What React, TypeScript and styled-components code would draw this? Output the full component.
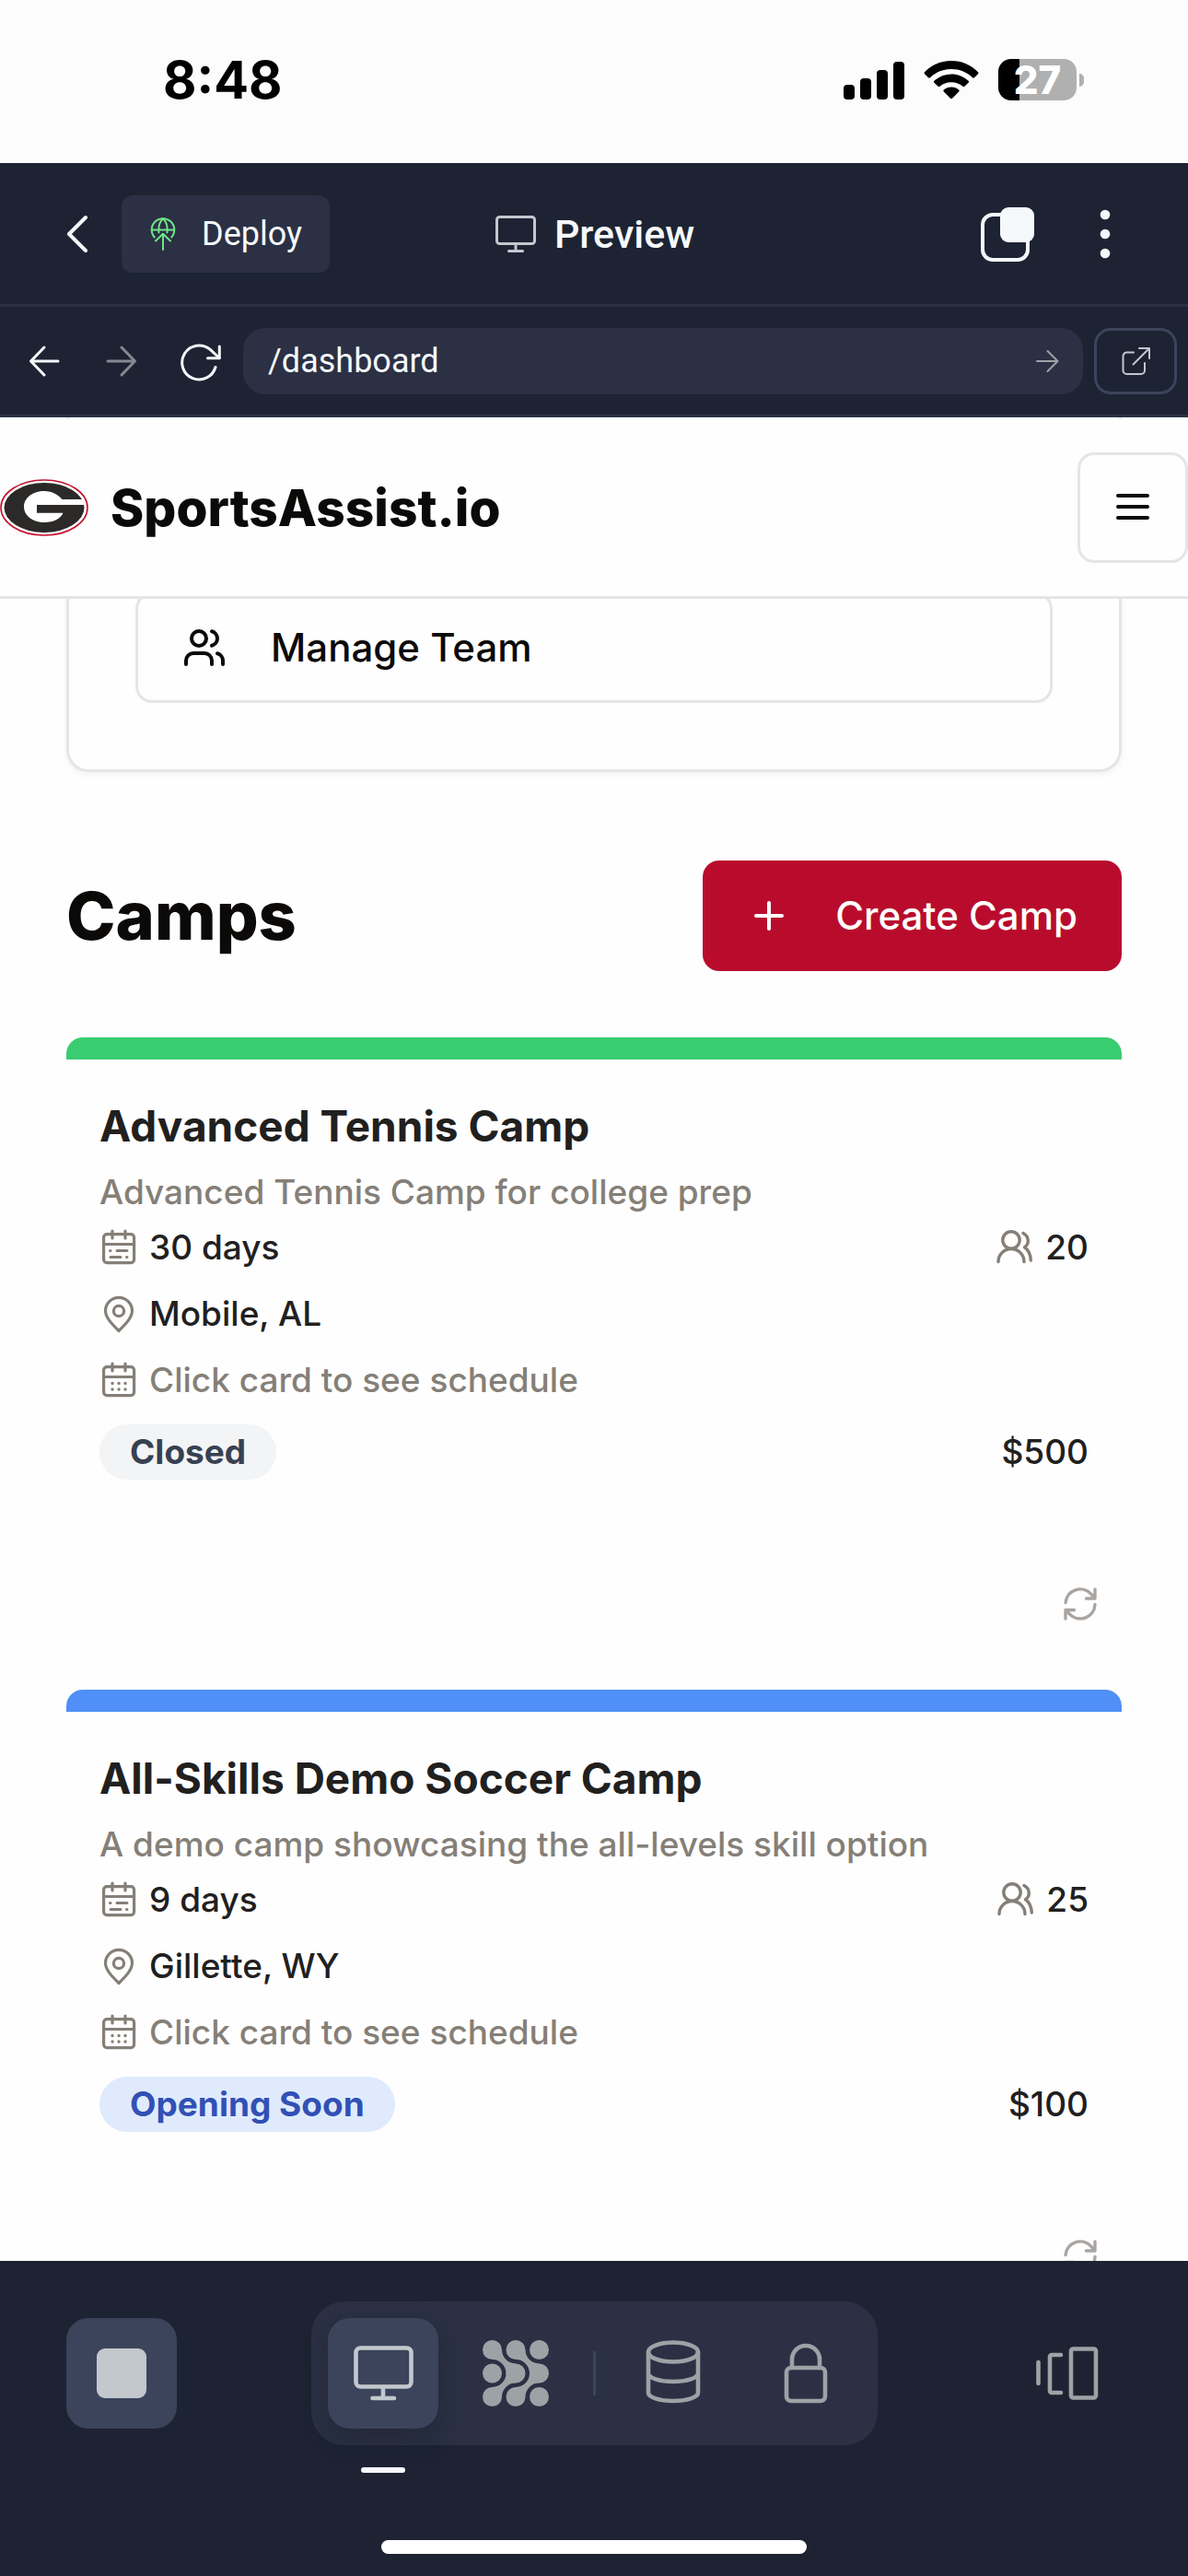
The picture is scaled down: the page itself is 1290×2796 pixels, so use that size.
import React from "react";
import styled, { createGlobalStyle } from "styled-components";
import { Plus, Users } from "lucide-react";

const GlobalStyle = createGlobalStyle`
  *, *::before, *::after { box-sizing: border-box; }
  body { margin: 0; background: #1d2333; }
  h1, h2, h3, p { margin: 0; }
  button, input { font: inherit; color: inherit; border: 0; margin: 0; padding: 0; background: none; }
  svg { display: block; flex: none; }
`;

const color = {
  navy: "#1d2333",
  slate: "#2b3044",
  steel: "#3c445c",
  snow: "#f5f9fc",
  silver: "#c2c8cc",
  muted: "#9da2a6",
  ink: "#0c0a09",
  line: "#e5e5e5",
  stone: "#857f78",
  red: "#b90c2d",
};

const Shell = styled.div`
  display: flex;
  flex-direction: column;
  height: 100vh;
  font-family: Inter, "Liberation Sans", sans-serif;
  color: ${color.ink};
`;

/* ---------- Phone status bar ---------- */

const StatusBar = styled.div`
  display: flex;
  flex: none;
  justify-content: space-between;
  align-items: center;
  height: 177px;
  padding: 0 113px 4px 177px;
  background: #fcfcfc;
  color: #000;
`;

const Clock = styled.time`
  font-size: 56px;
  line-height: 60px;
  font-weight: 700;
`;

const StatusIcons = styled.div`
  display: flex;
  align-items: center;
  gap: 21px;
`;

const BatteryWrap = styled.div`
  display: flex;
  align-items: center;
  gap: 3px;
`;

const Battery = styled.div`
  width: 85px;
  height: 45px;
  border-radius: 14px;
  background: linear-gradient(90deg, #000 27%, #b0b0b0 27%);
  color: #fff;
  font-size: 42px;
  line-height: 45px;
  font-weight: 800;
  text-align: center;
`;

const BatteryTip = styled.div`
  width: 5px;
  height: 14px;
  border-radius: 0 6px 6px 0;
  background: #b0b0b0;
`;

/* ---------- Workspace header ---------- */

const TopBar = styled.header`
  display: grid;
  flex: none;
  grid-template-columns: 1fr auto 1fr;
  align-items: center;
  height: 156px;
  padding: 0 60px;
  background: ${color.navy};
  border-bottom: 3px solid ${color.slate};
  color: ${color.snow};
  font-family: Roboto, "Liberation Sans", sans-serif;
`;

const TopBarLeft = styled.div`
  display: flex;
  align-items: center;
  gap: 24px;
`;

const TopBarRight = styled.div`
  display: flex;
  justify-content: flex-end;
  align-items: center;
  gap: 46px;
`;

const IconButton = styled.button<{ $size?: number; $tone?: string }>`
  display: grid;
  flex: none;
  place-items: center;
  width: ${(p) => p.$size ?? 60}px;
  height: ${(p) => p.$size ?? 60}px;
  color: ${(p) => p.$tone ?? color.snow};
`;

const DeployButton = styled.button`
  display: flex;
  align-items: center;
  gap: 24px;
  height: 84px;
  padding: 0 30px 0 27px;
  border-radius: 12px;
  background: ${color.slate};
  font-size: 36px;
  line-height: 48px;
`;

const ScreenTitle = styled.h1`
  display: flex;
  align-items: center;
  gap: 18px;
  font-size: 43px;
  line-height: 48px;
  font-weight: 500;
`;

/* ---------- Address bar ---------- */

const AddressBar = styled.nav`
  display: flex;
  flex: none;
  align-items: center;
  height: 120px;
  padding: 0 12px 0 6px;
  background: ${color.navy};
  border-bottom: 3px solid ${color.slate};
  font-family: Roboto, "Liberation Sans", sans-serif;
`;

const AddressField = styled.form`
  display: flex;
  flex: 1;
  align-items: center;
  min-width: 0;
  height: 72px;
  margin: 0 12px 0 6px;
  padding: 0 9px 0 27px;
  border-radius: 24px;
  background: ${color.slate};
`;

const AddressInput = styled.input`
  flex: 1;
  min-width: 0;
  color: ${color.snow};
  font-size: 36px;
  line-height: 48px;
  outline: none;
`;

const OpenButton = styled.button`
  display: grid;
  flex: none;
  place-items: center;
  width: 90px;
  height: 72px;
  border: 3px solid ${color.steel};
  border-radius: 18px;
  color: ${color.silver};
`;

/* ---------- Previewed site ---------- */

const Viewport = styled.div`
  flex: 1;
  min-height: 0;
  overflow: hidden;
  padding-top: 2px;
  background: #fefefe;
`;

const SiteHeader = styled.header`
  position: relative;
  z-index: 1;
  display: flex;
  justify-content: space-between;
  align-items: center;
  height: 195px;
  background: #fefefe;
  border-bottom: 3px solid ${color.line};
`;

const Brand = styled.a`
  display: flex;
  align-items: center;
  gap: 24px;
  color: inherit;
  font-size: 55px;
  line-height: 60px;
  font-weight: 800;
  text-decoration: none;
`;

const MenuButton = styled.button`
  display: grid;
  place-items: center;
  width: 120px;
  height: 120px;
  border: 3px solid ${color.line};
  border-radius: 18px;
`;

const Content = styled.main`
  padding: 0 72px;
`;

/* The card is scrolled so that its upper part passes under the site header. */
const ActionsCard = styled.section`
  margin-top: -197px;
  padding: 190px 72px 72px;
  border: 3px solid ${color.line};
  border-top: 0;
  border-radius: 0 0 24px 24px;
  box-shadow: 0 3px 6px rgba(0, 0, 0, 0.05);
`;

const ActionButton = styled.button`
  display: flex;
  align-items: center;
  gap: 48px;
  width: 100%;
  height: 120px;
  padding: 0 48px;
  border: 3px solid ${color.line};
  border-radius: 18px;
  font-size: 42px;
  line-height: 60px;
  font-weight: 500;
`;

const SectionHead = styled.div`
  display: flex;
  justify-content: space-between;
  align-items: center;
  margin: 96px 0 72px;
`;

const SectionTitle = styled.h2`
  font-size: 72px;
  line-height: 84px;
  font-weight: 800;
`;

const CreateButton = styled.button`
  display: flex;
  align-items: center;
  gap: 48px;
  height: 120px;
  padding: 0 48px;
  border-radius: 18px;
  background: ${color.red};
  color: #fff;
  font-size: 42px;
  line-height: 60px;
  font-weight: 500;
`;

const CampList = styled.div`
  display: flex;
  flex-direction: column;
  gap: 57px;
`;

const CampCard = styled.article<{ $accent: string }>`
  border-top: 24px solid ${(p) => p.$accent};
  border-radius: 18px 18px 0 0;
  color: #21201e;
`;

const CampBody = styled.div`
  display: flex;
  flex-direction: column;
  padding: 36px 36px 0;
  font-size: 37px;
  line-height: 48px;
  font-weight: 500;
`;

const CampTitle = styled.h3`
  font-size: 46px;
  line-height: 72px;
  font-weight: 700;
`;

const CampNote = styled.p`
  margin: 12px 0;
  color: ${color.stone};
`;

const CampRow = styled.div`
  display: flex;
  justify-content: space-between;
  align-items: center;
  min-height: 48px;

  & + & {
    margin-top: 24px;
  }
`;

const Detail = styled.span<{ $muted?: boolean }>`
  display: flex;
  align-items: center;
  gap: 12px;
  color: ${(p) => (p.$muted ? color.stone : "inherit")};

  svg {
    color: ${color.stone};
  }
`;

const Badge = styled.span<{ $bg: string; $fg: string }>`
  height: 60px;
  padding: 0 33px;
  border-radius: 30px;
  background: ${(p) => p.$bg};
  color: ${(p) => p.$fg};
  line-height: 60px;
  font-weight: 700;
`;

const CampFooter = styled.div`
  display: flex;
  justify-content: flex-end;
  margin-top: 99px;
  padding: 0 9px;
`;

/* ---------- Bottom toolbar ---------- */

const BottomBar = styled.footer`
  display: flex;
  flex: none;
  flex-direction: column;
  justify-content: space-between;
  align-items: center;
  height: 342px;
  padding: 44px 0 24px;
  background: ${color.navy};
`;

const ToolRow = styled.div`
  display: grid;
  grid-template-columns: 1fr auto 1fr;
  align-items: center;
  width: 100%;
  padding: 0 72px;
`;

const StopButton = styled.button`
  display: grid;
  place-items: center;
  width: 120px;
  height: 120px;
  border-radius: 24px;
  background: ${color.steel};
`;

const StopMark = styled.span`
  width: 54px;
  height: 54px;
  border-radius: 9px;
  background: ${color.silver};
`;

const TabGroup = styled.div`
  display: flex;
  align-items: center;
  gap: 24px;
  padding: 18px;
  border-radius: 36px;
  background: ${color.slate};
`;

const Tab = styled.button<{ $active?: boolean }>`
  position: relative;
  display: grid;
  place-items: center;
  width: 120px;
  height: 120px;
  border-radius: 24px;
  background: ${(p) => (p.$active ? color.steel : "transparent")};
  color: ${(p) => (p.$active ? color.silver : color.muted)};
  box-shadow: ${(p) => (p.$active ? "0 12px 30px rgba(16, 20, 34, 0.3)" : "none")};
`;

const TabMarker = styled.span`
  position: absolute;
  bottom: -48px;
  left: 36px;
  width: 48px;
  height: 6px;
  border-radius: 3px;
  background: ${color.snow};
`;

const TabDivider = styled.span`
  width: 3px;
  height: 48px;
  background: ${color.steel};
`;

const PanelSwitch = styled.div`
  display: flex;
  justify-content: flex-end;
  padding-right: 24px;
`;

const HomeIndicator = styled.div`
  width: 462px;
  height: 15px;
  border-radius: 8px;
  background: #fff;
`;

/* ---------- Icons ---------- */

type StrokeProps = { w: number; h?: number; sw: number; children: React.ReactNode };

const Stroke = ({ w, h = w, sw, children }: StrokeProps) => (
  <svg width={w} height={h} viewBox={`0 0 ${w} ${h}`} fill="none" stroke="currentColor"
    strokeWidth={sw} strokeLinecap="round" strokeLinejoin="round" aria-hidden="true">
    {children}
  </svg>
);

const SignalIcon = () => (
  <svg width="66" height="42" viewBox="0 0 66 42" fill="#000" aria-hidden="true">
    <rect x="0" y="26" width="12" height="16" rx="4" />
    <rect x="18" y="19" width="12" height="23" rx="4" />
    <rect x="36" y="10" width="12" height="32" rx="4" />
    <rect x="54" y="1" width="12" height="41" rx="4" />
  </svg>
);

const WifiIcon = () => (
  <svg width="60" height="42" viewBox="0 0 60 42" fill="#000" aria-hidden="true">
    <path d="M30 0C41.500 0 51.500 4.600 59 12.200Q60 13.200 59 14.200L55 18.200Q54 19.100 53 18.200C46.800 12.200 38.800 9 30 9S13.200 12.200 7 18.200Q6 19.100 5 18.200L1 14.200Q0 13.200 1 12.200C8.500 4.600 18.500 0 30 0Z" />
    <path d="M30 14.500C37.200 14.500 43.600 17.200 48.600 21.800Q49.600 22.800 48.600 23.800L44.400 27.800Q43.400 28.600 42.400 27.800C39 24.800 34.800 23.200 30 23.200S21 24.800 17.600 27.800Q16.600 28.600 15.600 27.800L11.400 23.800Q10.400 22.800 11.400 21.800C16.400 17.200 22.800 14.500 30 14.500Z" />
    <path d="M30 28.500C33.300 28.500 36 29.600 38.200 31.400Q39.200 32.400 38.200 33.400L31 40.700Q30 41.600 29 40.700L21.800 33.400Q20.800 32.400 21.800 31.400C24 29.600 26.700 28.500 30 28.500Z" />
  </svg>
);

const BackIcon = () => (
  <Stroke w={48} sw={4}><path d="M33 6 15 24l18 18" /></Stroke>
);

const DeployIcon = () => (
  <svg width="36" height="36" viewBox="0 0 36 36" fill="none" stroke="#6fe587" strokeWidth="2"
    strokeLinecap="round" strokeLinejoin="round" aria-hidden="true">
    <path d="M8.700 21.500A12.300 12.300 0 1 1 27.300 21.500" />
    <path d="M6 13.500h24" />
    <path d="M13.500 16.500C12.800 10 14.500 4.500 18 1.300C21.500 4.500 23.200 10 22.500 16.500" />
    <path d="M18 35V18" />
    <path d="M10 25.500 18 17.800l8 7.700" />
  </svg>
);

const MonitorSmall = () => (
  <svg width="48" height="48" viewBox="0 0 48 48" fill="none" stroke={color.silver} strokeWidth="3"
    strokeLinecap="round" strokeLinejoin="round" aria-hidden="true">
    <rect x="3.500" y="5.500" width="41" height="29" rx="3" />
    <path d="M24 35v7M16.500 42.500h15" />
  </svg>
);

const WindowsIcon = () => (
  <svg width="60" height="60" viewBox="0 0 60 60" aria-hidden="true">
    <rect x="3" y="9" width="49" height="49" rx="11" fill="none" stroke={color.snow} strokeWidth="4" />
    <rect x="22" y="1" width="37" height="38" rx="9" fill={color.snow} />
  </svg>
);

const MoreIcon = () => (
  <svg width="60" height="60" viewBox="0 0 60 60" fill={color.snow} aria-hidden="true">
    <circle cx="30" cy="9" r="5.300" />
    <circle cx="30" cy="30" r="5.300" />
    <circle cx="30" cy="51" r="5.300" />
  </svg>
);

const ArrowLeft = () => (
  <Stroke w={36} sw={3}><path d="M33 18H4M18 3 3.500 18 18 33" /></Stroke>
);

const ArrowRight = ({ small = false }: { small?: boolean }) =>
  small ? (
    <Stroke w={30} sw={2}><path d="M4 15h22M15.500 4 26.500 15l-11 11" /></Stroke>
  ) : (
    <Stroke w={36} sw={3}><path d="M3 18h29M18 3l14.500 15L18 33" /></Stroke>
  );

const ReloadIcon = () => (
  <Stroke w={48} sw={3}>
    <path d="M42 30.500A18.500 18.500 0 1 1 36 11.200L46 20.500" />
    <path d="M46.300 8v12.700H33.500" />
  </Stroke>
);

const OpenIcon = () => (
  <Stroke w={32} sw={2}>
    <path d="M14 6.500H6.500a4 4 0 0 0-4 4V26a4 4 0 0 0 4 4H22a4 4 0 0 0 4-4V18" />
    <path d="M20 2h11v11M30.500 2.500 13.500 19.500" />
  </Stroke>
);

const LogoIcon = () => (
  <svg width="96" height="62" viewBox="0 0 96 62" aria-hidden="true">
    <ellipse cx="48" cy="31" rx="47" ry="30" fill="#fff" stroke="#c4122f" strokeWidth="1.600" />
    <ellipse cx="48" cy="31" rx="43.500" ry="27" fill="#2b2a29" />
    <path fill="#fff" d="M26 30C26 20 36 13 48 13c9 0 15 4 19.500 9H89l3 6H40v8.700h28.500C66 43 58 47 48 47 36 47 26 40 26 30Z" />
  </svg>
);

const MenuIcon = () => (
  <Stroke w={48} sw={4}><path d="M8 11h32M8 23h32M8 35h32" /></Stroke>
);

const CalendarBase = ({ children }: { children: React.ReactNode }) => (
  <Stroke w={42} sw={3.2}>
    <rect x="4.600" y="6.600" width="33" height="31" rx="3.500" />
    <path d="M4.600 17.500h33M14 3v8M28 3v8" />
    {children}
  </Stroke>
);

const DurationIcon = () => (
  <CalendarBase>
    <path d="M11.500 24.500h.5M19 24.500h11M12 31.500h11M29.500 31.500h.5" strokeWidth="3" />
  </CalendarBase>
);

const ScheduleIcon = () => (
  <CalendarBase>
    <path d="M14 24.500h.1M21 24.500h.1M28 24.500h.1M14 31h.1M21 31h.1M28 31h.1" strokeWidth="3.400" />
  </CalendarBase>
);

const PinIcon = () => (
  <Stroke w={42} sw={3.2}>
    <path d="M21 39.500C13 31.500 6.500 25 6.500 17.800a14.500 14.500 0 0 1 29 0C35.500 25 29 31.500 21 39.500Z" />
    <circle cx="21" cy="18" r="5.600" />
  </Stroke>
);

const PlayersIcon = () => (
  <Stroke w={42} sw={3.4}>
    <circle cx="17" cy="13" r="9.200" />
    <path d="M3 36.500a14 14 0 0 1 28 0" />
    <path d="M30 5.500c6.500 3.500 7 11.500 1.500 15.200 4 2.600 6.500 8 6.800 14.300" />
  </Stroke>
);

const SyncIcon = () => (
  <Stroke w={42} sw={3.4}>
    <path d="M5 19.500A16 16 0 0 1 32.500 10l4.500 4.500M37 5v10H27.500" />
    <path d="M37 21.500A16 16 0 0 1 9.500 32L5 27.500M5 37V27.500h9.500" />
  </Stroke>
);

const MonitorLarge = () => (
  <Stroke w={72} sw={4.6}>
    <rect x="6.500" y="8.500" width="60" height="42" rx="5" />
    <path d="M36 51v12M24.500 63h23.500" />
  </Stroke>
);

const MeshLink = () => (
  <>
    <path d="M10.500 21A15 15 0 0 1 25.500 36H36V25.500A15 15 0 0 1 21 10.500H10.500Z" />
    <path transform="translate(0 72) scale(1 -1)" d="M10.500 21A15 15 0 0 1 25.500 36H36V25.500A15 15 0 0 1 21 10.500H10.500Z" />
  </>
);

const MeshIcon = () => {
  const stops = [10.5, 36, 61.5];
  return (
    <svg width="72" height="72" viewBox="0 0 72 72" fill="currentColor" aria-hidden="true">
      {stops.map((x) => stops.map((y) => <circle key={`${x}-${y}`} cx={x} cy={y} r="10.500" />))}
      <MeshLink />
      <g transform="translate(25.500 0)"><MeshLink /></g>
    </svg>
  );
};

const DatabaseIcon = () => (
  <Stroke w={72} sw={4.6}>
    <ellipse cx="36" cy="13" rx="27" ry="10.500" />
    <path d="M9 13v44c0 5 12 9 27 9s27-4 27-9V13M9 36c0 5 12 9 27 9s27-4 27-9" />
  </Stroke>
);

const LockIcon = () => (
  <Stroke w={72} sw={4.6}>
    <rect x="15" y="30" width="42" height="36" rx="5" />
    <path d="M21 30V21a15 15 0 0 1 30 0v9" />
  </Stroke>
);

const PanelsIcon = () => (
  <Stroke w={72} sw={4.6}>
    <path d="M5.500 24v23M30 16H20a2 2 0 0 0-2 2v37a2 2 0 0 0 2 2h10" />
    <rect x="41" y="9.500" width="27" height="53" rx="2.500" />
  </Stroke>
);

/* ---------- Data ---------- */

const camps = [
  {
    name: "Advanced Tennis Camp",
    note: "Advanced Tennis Camp for college prep",
    days: "30 days",
    place: "Mobile, AL",
    spots: 20,
    price: "$500",
    status: "Closed",
    accent: "#39cc71",
    bg: "#f3f4f6",
    fg: "#374151",
  },
  {
    name: "All-Skills Demo Soccer Camp",
    note: "A demo camp showcasing the all-levels skill option",
    days: "9 days",
    place: "Gillette, WY",
    spots: 25,
    price: "$100",
    status: "Opening Soon",
    accent: "#4f8ff7",
    bg: "#dfebfd",
    fg: "#3250b5",
  },
];

const Camp = ({ camp }: { camp: (typeof camps)[number] }) => (
  <CampCard $accent={camp.accent}>
    <CampBody>
      <CampTitle>{camp.name}</CampTitle>
      <CampNote>{camp.note}</CampNote>
      <CampRow>
        <Detail><DurationIcon />{camp.days}</Detail>
        <Detail><PlayersIcon />{camp.spots}</Detail>
      </CampRow>
      <CampRow>
        <Detail><PinIcon />{camp.place}</Detail>
      </CampRow>
      <CampRow>
        <Detail $muted><ScheduleIcon />Click card to see schedule</Detail>
      </CampRow>
      <CampRow>
        <Badge $bg={camp.bg} $fg={camp.fg}>{camp.status}</Badge>
        <span>{camp.price}</span>
      </CampRow>
    </CampBody>
    <CampFooter>
      <IconButton $size={72} $tone="#a9a5a2" aria-label="Refresh camp"><SyncIcon /></IconButton>
    </CampFooter>
  </CampCard>
);

export default function App() {
  return (
    <>
      <GlobalStyle />
      <Shell>
        <StatusBar>
          <Clock>8:48</Clock>
          <StatusIcons>
            <SignalIcon />
            <WifiIcon />
            <BatteryWrap>
              <Battery>27</Battery>
              <BatteryTip />
            </BatteryWrap>
          </StatusIcons>
        </StatusBar>

        <TopBar>
          <TopBarLeft>
            <IconButton $size={48} aria-label="Back"><BackIcon /></IconButton>
            <DeployButton><DeployIcon />Deploy</DeployButton>
          </TopBarLeft>
          <ScreenTitle><MonitorSmall />Preview</ScreenTitle>
          <TopBarRight>
            <IconButton aria-label="Windows"><WindowsIcon /></IconButton>
            <IconButton aria-label="More"><MoreIcon /></IconButton>
          </TopBarRight>
        </TopBar>

        <AddressBar>
          <IconButton $size={84} aria-label="Previous page"><ArrowLeft /></IconButton>
          <IconButton $size={84} $tone="#85898f" aria-label="Next page"><ArrowRight /></IconButton>
          <IconButton $size={84} aria-label="Reload"><ReloadIcon /></IconButton>
          <AddressField onSubmit={(e) => e.preventDefault()}>
            <AddressInput aria-label="Path" defaultValue="/dashboard" />
            <IconButton $tone={color.muted} aria-label="Go"><ArrowRight small /></IconButton>
          </AddressField>
          <OpenButton aria-label="Open in new tab"><OpenIcon /></OpenButton>
        </AddressBar>

        <Viewport>
          <SiteHeader>
            <Brand href="#"><LogoIcon />SportsAssist.io</Brand>
            <MenuButton aria-label="Menu"><MenuIcon /></MenuButton>
          </SiteHeader>
          <Content>
            <ActionsCard>
              <ActionButton><Users size={48} strokeWidth={2} />Manage Team</ActionButton>
            </ActionsCard>
            <SectionHead>
              <SectionTitle>Camps</SectionTitle>
              <CreateButton><Plus size={48} strokeWidth={2} />Create Camp</CreateButton>
            </SectionHead>
            <CampList>
              {camps.map((camp) => <Camp key={camp.name} camp={camp} />)}
            </CampList>
          </Content>
        </Viewport>

        <BottomBar>
          <ToolRow>
            <StopButton aria-label="Stop"><StopMark /></StopButton>
            <TabGroup>
              <Tab $active aria-label="Preview"><MonitorLarge /><TabMarker /></Tab>
              <Tab aria-label="Agent"><MeshIcon /></Tab>
              <TabDivider />
              <Tab aria-label="Database"><DatabaseIcon /></Tab>
              <Tab aria-label="Secrets"><LockIcon /></Tab>
            </TabGroup>
            <PanelSwitch>
              <IconButton $size={72} $tone={color.muted} aria-label="Panels"><PanelsIcon /></IconButton>
            </PanelSwitch>
          </ToolRow>
          <HomeIndicator />
        </BottomBar>
      </Shell>
    </>
  );
}
